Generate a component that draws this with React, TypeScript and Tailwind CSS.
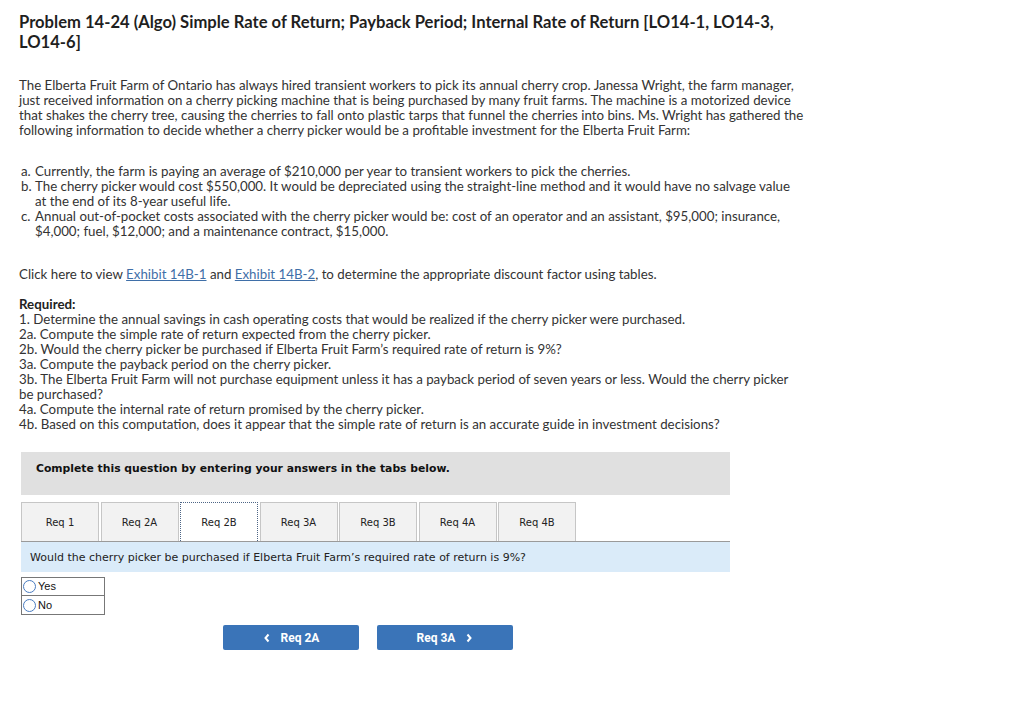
import React from "react";

const tabs = ["Req 1", "Req 2A", "Req 2B", "Req 3A", "Req 3B", "Req 4A", "Req 4B"];

export default function App() {
  return (
    <div className="min-h-[708px] bg-white text-[#333] font-['Lato',sans-serif]">
      <div className="w-[802px] pl-[19px] pt-[12px]">
        <h1 className="text-[16.6px] leading-[20px] font-bold text-[#1f1f1f]">
          Problem 14-24 (Algo) Simple Rate of Return; Payback Period; Internal Rate of Return [LO14-1, LO14-3, LO14-6]
        </h1>
        <p className="mt-[26px] w-[789px] text-[13.3px] leading-[15px]">
          The Elberta Fruit Farm of Ontario has always hired transient workers to pick its annual cherry crop. Janessa Wright, the farm manager, just received information on a cherry picking machine that is being purchased by many fruit farms. The machine is a motorized device that shakes the cherry tree, causing the cherries to fall onto plastic tarps that funnel the cherries into bins. Ms. Wright has gathered the following information to decide whether a cherry picker would be a profitable investment for the Elberta Fruit Farm:
        </p>
        <ul className="mt-[26px] text-[13.3px] leading-[15px] pl-[2px]">
          <li className="flex">
            <span className="w-[14px] shrink-0">a.</span>
            <span>Currently, the farm is paying an average of $210,000 per year to transient workers to pick the cherries.</span>
          </li>
          <li className="flex">
            <span className="w-[14px] shrink-0">b.</span>
            <span>The cherry picker would cost $550,000. It would be depreciated using the straight-line method and it would have no salvage value at the end of its 8-year useful life.</span>
          </li>
          <li className="flex">
            <span className="w-[14px] shrink-0">c.</span>
            <span>Annual out-of-pocket costs associated with the cherry picker would be: cost of an operator and an assistant, $95,000; insurance, $4,000; fuel, $12,000; and a maintenance contract, $15,000.</span>
          </li>
        </ul>
        <p className="mt-[28px] text-[13.3px] leading-[15px]">
          Click here to view <a className="text-[#3f6fa8] underline">Exhibit 14B-1</a> and <a className="text-[#3f6fa8] underline">Exhibit 14B-2</a>, to determine the appropriate discount factor using tables.
        </p>
        <div className="mt-[15px] text-[13.3px] leading-[15px]">
          <div className="font-bold text-[#222]">Required:</div>
          <div>1. Determine the annual savings in cash operating costs that would be realized if the cherry picker were purchased.</div>
          <div>2a. Compute the simple rate of return expected from the cherry picker.</div>
          <div>2b. Would the cherry picker be purchased if Elberta Fruit Farm’s required rate of return is 9%?</div>
          <div>3a. Compute the payback period on the cherry picker.</div>
          <div>3b. The Elberta Fruit Farm will not purchase equipment unless it has a payback period of seven years or less. Would the cherry picker be purchased?</div>
          <div>4a. Compute the internal rate of return promised by the cherry picker.</div>
          <div>4b. Based on this computation, does it appear that the simple rate of return is an accurate guide in investment decisions?</div>
        </div>
      </div>

      <div className="ml-[21px] mt-[20px] w-[709px] font-['DejaVu_Sans',Verdana,sans-serif]">
        <div className="h-[43px] bg-[#e0e0e0] pl-[15px] pt-[10px] text-[10.8px] leading-[14px] font-bold text-[#111]">
          Complete this question by entering your answers in the tabs below.
        </div>
        <div className="mt-[7px] flex gap-[1.5px] border-b border-[#9a9a9a]">
          {tabs.map((t, i) =>
            i === 2 ? (
              <div
                key={t}
                className="w-[78px] h-[39px] -mb-px bg-white border border-dotted border-[#4d6585] border-b-0 flex items-center justify-center text-[10px] text-[#222]"
              >
                {t}
              </div>
            ) : (
              <div
                key={t}
                className="w-[78px] h-[39px] bg-[#f2f2f2] border border-b-0 border-[#c6c6c6] flex items-center justify-center text-[10px] text-[#222]"
              >
                {t}
              </div>
            )
          )}
        </div>
        <div className="h-[30px] bg-[#daebf9] flex items-center pl-[9px] pt-[2px] text-[11px] text-[#222]">
          Would the cherry picker be purchased if Elberta Fruit Farm’s required rate of return is 9%?
        </div>
        <div className="mt-[5px] w-[84px] border border-[#777] font-['Liberation_Sans',Arial,sans-serif] text-[11px] text-[#111]">
          <label className="flex items-center h-[18px] border-b border-[#777]">
            <span className="ml-[1px] w-[13px] h-[13px] rounded-full border border-[#4a7cc0] bg-white"></span>
            <span className="ml-[2px]">Yes</span>
          </label>
          <label className="flex items-center h-[18px]">
            <span className="ml-[1px] w-[13px] h-[13px] rounded-full border border-[#4a7cc0] bg-white"></span>
            <span className="ml-[2px]">No</span>
          </label>
        </div>
        <div className="mt-[10px] ml-[202px] flex gap-[18px] font-['Roboto',sans-serif]">
          <button className="w-[136px] h-[25px] bg-[#3a74b8] rounded-[2px] text-white text-[12px] font-bold flex items-center justify-center gap-[10px]">
            <svg width="8" height="10" viewBox="0 0 8 10" fill="none">
              <path d="M5.5 1.5 L2.5 5 L5.5 8.5" stroke="white" strokeWidth="2" />
            </svg>
            <span>Req 2A</span>
          </button>
          <button className="w-[136px] h-[25px] bg-[#3a74b8] rounded-[2px] text-white text-[12px] font-bold flex items-center justify-center gap-[10px]">
            <span>Req 3A</span>
            <svg width="8" height="10" viewBox="0 0 8 10" fill="none">
              <path d="M2.5 1.5 L5.5 5 L2.5 8.5" stroke="white" strokeWidth="2" />
            </svg>
          </button>
        </div>
      </div>
    </div>
  );
}
